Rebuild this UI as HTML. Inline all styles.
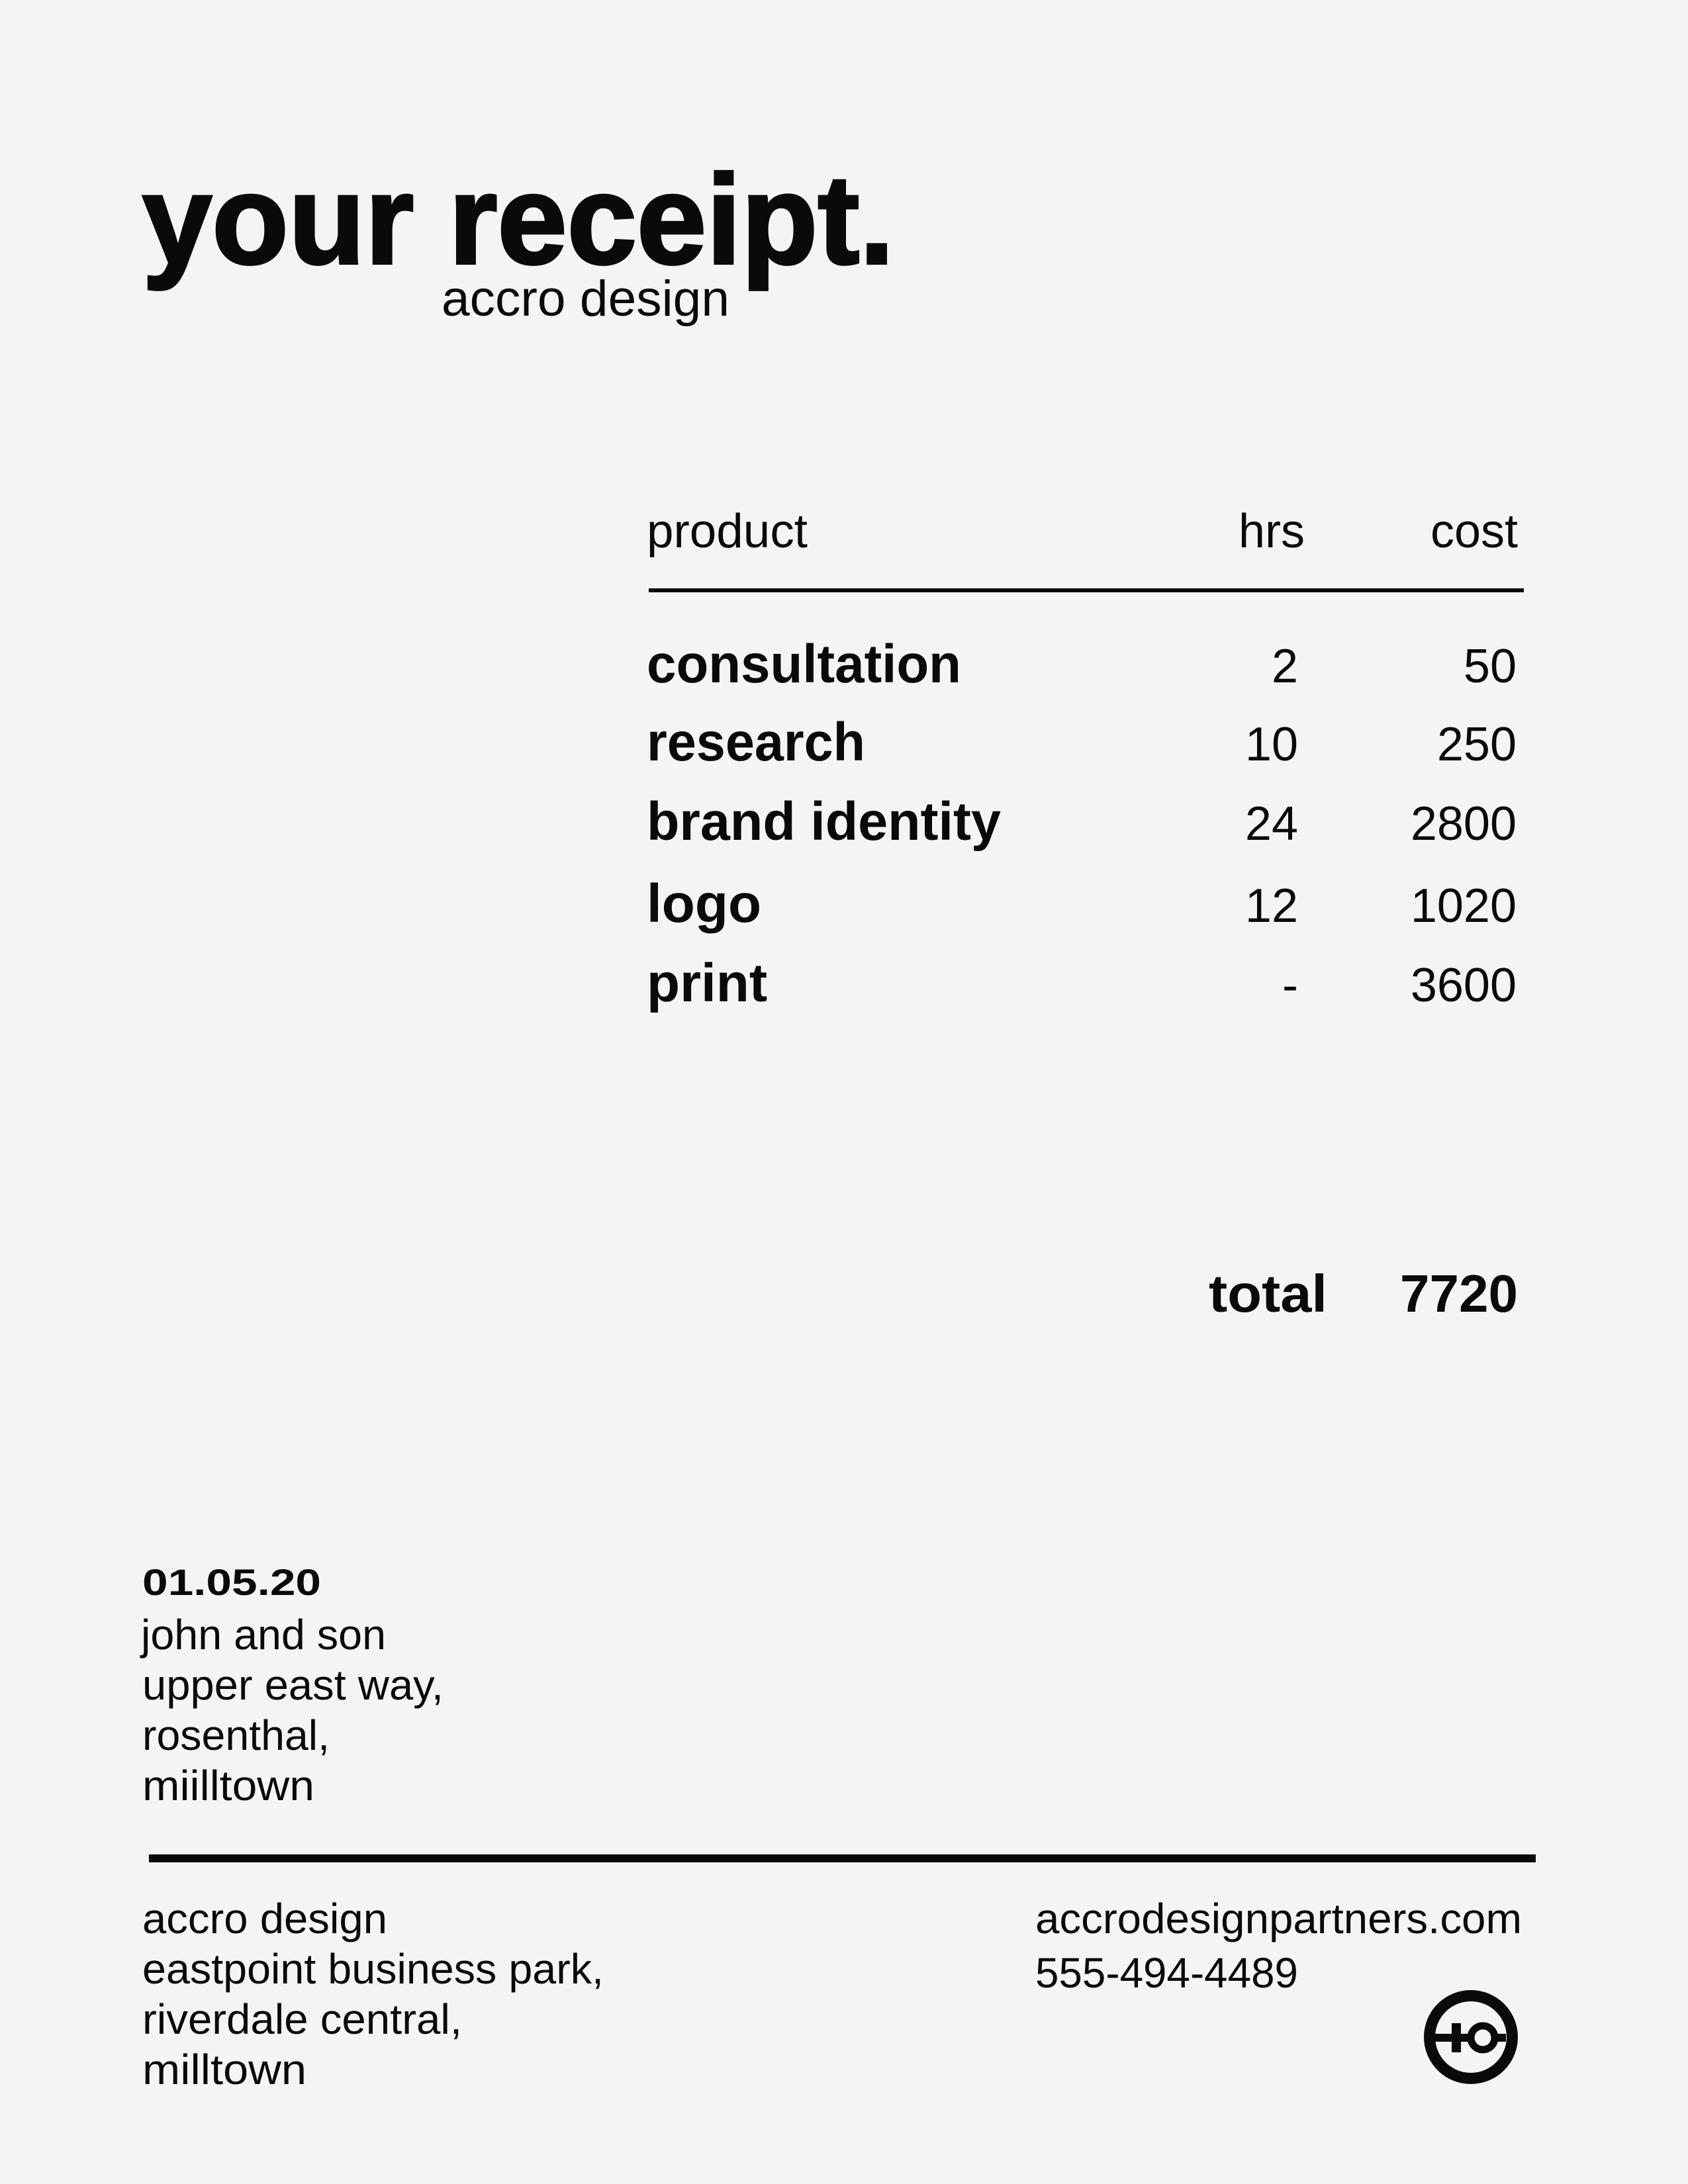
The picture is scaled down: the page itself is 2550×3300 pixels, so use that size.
<!DOCTYPE html>
<html><head><meta charset="utf-8"><style>
html,body{margin:0;padding:0;background:#f4f4f4;}
svg{display:block}
text{font-family:"Liberation Sans",sans-serif;fill:#0a0a0a}
.b{font-weight:bold}
</style></head><body>
<svg width="2550" height="3300" viewBox="0 0 2550 3300" xmlns="http://www.w3.org/2000/svg">
<rect width="2550" height="3300" fill="#f4f4f4"/>
<text class="b" x="215" y="398" font-size="192" textLength="1136" lengthAdjust="spacingAndGlyphs" stroke="#0a0a0a" stroke-width="4">your receipt.</text>
<text x="667" y="477" font-size="76" textLength="435" lengthAdjust="spacingAndGlyphs">accro design</text>

<text x="977" y="827" font-size="72" textLength="243" lengthAdjust="spacingAndGlyphs">product</text>
<text x="1971" y="827" font-size="72" text-anchor="end">hrs</text>
<text x="2293" y="827" font-size="72" text-anchor="end">cost</text>
<rect x="980" y="889" width="1322" height="6" fill="#0a0a0a"/>

<g font-size="82">
<text class="b" x="977" y="1031" textLength="475" lengthAdjust="spacingAndGlyphs">consultation</text>
<text class="b" x="977" y="1149" textLength="330" lengthAdjust="spacingAndGlyphs">research</text>
<text class="b" x="977" y="1269" textLength="535" lengthAdjust="spacingAndGlyphs">brand identity</text>
<text class="b" x="977" y="1393">logo</text>
<text class="b" x="977" y="1513">print</text>
</g>
<g font-size="72" text-anchor="end">
<text x="1961" y="1031">2</text><text x="2291" y="1031">50</text>
<text x="1961" y="1149">10</text><text x="2291" y="1149">250</text>
<text x="1961" y="1269">24</text><text x="2291" y="1269">2800</text>
<text x="1961" y="1393">12</text><text x="2291" y="1393">1020</text>
<text x="1961" y="1513">-</text><text x="2291" y="1513">3600</text>
</g>
<text class="b" x="1826" y="1982" font-size="80" textLength="179" lengthAdjust="spacingAndGlyphs">total</text>
<text class="b" x="2115" y="1982" font-size="80" textLength="178" lengthAdjust="spacingAndGlyphs">7720</text>

<text class="b" x="215" y="2410" font-size="56" textLength="270" lengthAdjust="spacingAndGlyphs">01.05.20</text>
<g font-size="64">
<text x="213" y="2492" textLength="370" lengthAdjust="spacingAndGlyphs">john and son</text>
<text x="215" y="2568" textLength="455" lengthAdjust="spacingAndGlyphs">upper east way,</text>
<text x="215" y="2644" textLength="283" lengthAdjust="spacingAndGlyphs">rosenthal,</text>
<text x="215" y="2720" textLength="260" lengthAdjust="spacingAndGlyphs">miilltown</text>
</g>
<rect x="225" y="2802" width="2095" height="12" fill="#0a0a0a"/>
<g font-size="64">
<text x="215" y="2921" textLength="370" lengthAdjust="spacingAndGlyphs">accro design</text>
<text x="215" y="2997" textLength="697" lengthAdjust="spacingAndGlyphs">eastpoint business park,</text>
<text x="215" y="3073" textLength="483" lengthAdjust="spacingAndGlyphs">riverdale central,</text>
<text x="215" y="3149" textLength="248" lengthAdjust="spacingAndGlyphs">milltown</text>
<text x="1564" y="2921" textLength="735" lengthAdjust="spacingAndGlyphs">accrodesignpartners.com</text>
<text x="1564" y="3003" textLength="397" lengthAdjust="spacingAndGlyphs">555-494-4489</text>
</g>
<g fill="none" stroke="#0a0a0a">
<circle cx="2222" cy="3078" r="62.5" stroke-width="17"/>
</g>
<rect x="2168" y="3073" width="107" height="12" fill="#0a0a0a"/>
<rect x="2193" y="3057" width="14" height="44" fill="#0a0a0a"/>
<circle cx="2240" cy="3079" r="18" fill="#f4f4f4" stroke="#0a0a0a" stroke-width="11"/>
</svg>
</body></html>
